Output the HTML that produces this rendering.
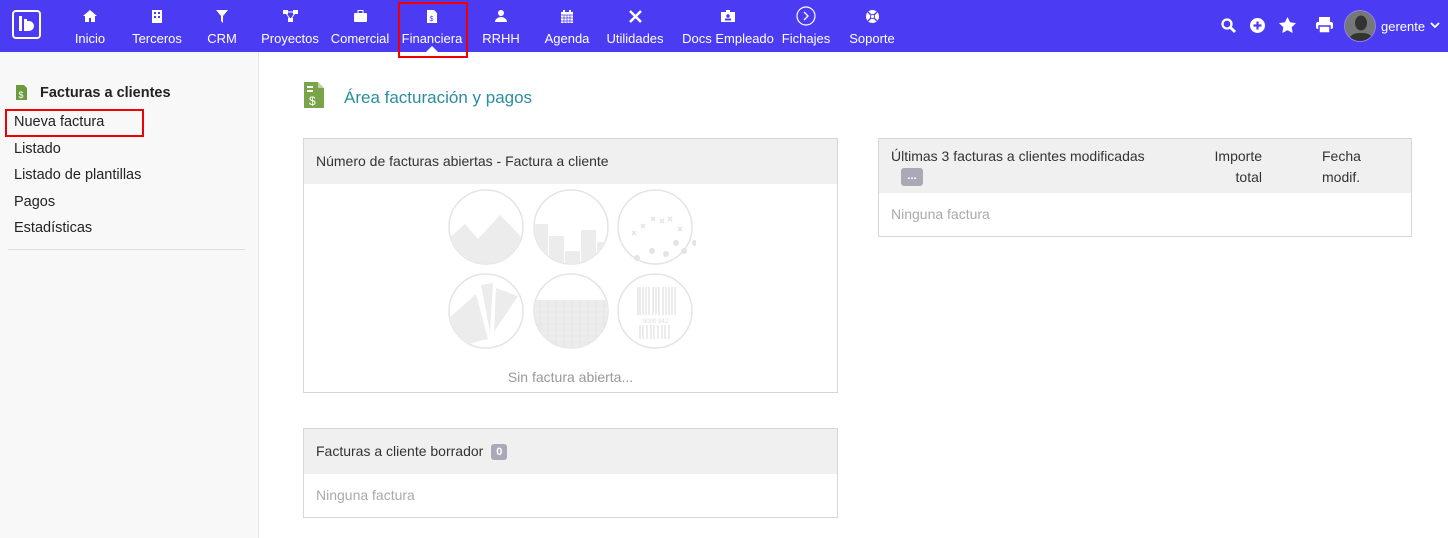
<!DOCTYPE html>
<html><head><meta charset="utf-8"><style>
*{box-sizing:border-box;margin:0;padding:0}
body{width:1448px;height:538px;overflow:hidden;font-family:"Liberation Sans",sans-serif;background:#fff;position:relative;color:#333}
.top{position:absolute;left:0;top:0;width:1448px;height:52px;background:#4b3cf4}
.logo{position:absolute;left:12px;top:10px;width:29px;height:29px;border:2.5px solid #fff;border-radius:4px}
.nav{position:absolute;top:0;height:52px;width:100px;text-align:center;color:#fff;font-size:13px;transform:translateX(-50%);white-space:nowrap}
.nav .ic{position:absolute;left:0;width:100%;top:10px;height:13px;display:flex;justify-content:center}
.nav .lb{position:absolute;left:0;width:100%;top:31px}
.sel{position:absolute;left:398px;top:2px;width:70px;height:56px;border:2px solid #e00;z-index:3}
.side{position:absolute;left:0;top:52px;width:259px;height:486px;background:#f8f8f8;border-right:1px solid #e6e6e6}
.side a{position:absolute;left:14px;font-size:14.5px;color:#222}
.box{position:absolute;border:1px solid #d6d6d6;background:#fff}
.hd{background:#f0f0f0;font-size:14px;color:#333}
.muted{color:#aaa;font-size:14px}
</style></head><body>
<div class="top">
<div class="logo"><svg width="24" height="24" viewBox="0 0 24 24"><rect x="5" y="4" width="3" height="15" fill="#fff"/><rect x="10" y="7" width="3" height="12" fill="#fff"/><path d="M13 9 h2 a4 4 0 0 1 0 10 h-2z" fill="#fff"/></svg></div>
<div class="nav" style="left:90px"><div class="ic"><svg width="14" height="12"><path d="M7 0L0 6h2v6h4V8h2v4h4V6h2z" fill="#fff"/></svg></div><div class="lb">Inicio</div></div>
<div class="nav" style="left:157px"><div class="ic"><svg width="10" height="13"><rect width="10" height="13" fill="#fff"/><rect x="2" y="2" width="2" height="2" fill="#4b3cf4"/><rect x="6" y="2" width="2" height="2" fill="#4b3cf4"/><rect x="2" y="6" width="2" height="2" fill="#4b3cf4"/><rect x="6" y="6" width="2" height="2" fill="#4b3cf4"/></svg></div><div class="lb">Terceros</div></div>
<div class="nav" style="left:222px"><div class="ic"><svg width="12" height="13"><path d="M0 0h12L7 6v7L5 11V6z" fill="#fff"/></svg></div><div class="lb">CRM</div></div>
<div class="nav" style="left:290px"><div class="ic"><svg width="15" height="12"><rect width="5" height="4" fill="#fff"/><rect x="10" width="5" height="4" fill="#fff"/><rect x="5" y="8" width="5" height="4" fill="#fff"/><path d="M3 3l4 6M12 3l-4 6M5 2h5" stroke="#fff"/></svg></div><div class="lb">Proyectos</div></div>
<div class="nav" style="left:360px"><div class="ic"><svg width="13" height="12"><rect y="3" width="13" height="9" rx="1" fill="#fff"/><rect x="4" y=".5" width="5" height="3" fill="none" stroke="#fff"/></svg></div><div class="lb">Comercial</div></div>
<div class="nav" style="left:432px"><div class="ic"><svg width="10" height="13"><path d="M0 0h7l3 3v10H0z" fill="#fff"/><text x="2.5" y="11" font-size="7" fill="#4b3cf4" font-family="Liberation Sans">$</text></svg></div><div class="lb">Financiera</div><svg width="12" height="6" style="position:absolute;left:44px;top:46px"><path d="M0 6L6 0l6 6z" fill="#fff"/></svg></div>
<div class="nav" style="left:501px"><div class="ic"><svg width="12" height="12"><circle cx="6" cy="3" r="3" fill="#fff"/><path d="M0 12a6 5 0 0 1 12 0z" fill="#fff"/></svg></div><div class="lb">RRHH</div></div>
<div class="nav" style="left:567px"><div class="ic"><svg width="12" height="13"><rect y="2" width="12" height="11" fill="#fff"/><rect x="2" y="0" width="2" height="3" fill="#fff"/><rect x="8" width="2" height="3" fill="#fff"/><path d="M0 5h12M3 5v8M6 5v8M9 5v8M0 8h12M0 11h12" stroke="#4b3cf4" stroke-width=".7"/></svg></div><div class="lb">Agenda</div></div>
<div class="nav" style="left:635px"><div class="ic"><svg width="13" height="13"><path d="M1 1l11 11M12 1L1 12" stroke="#fff" stroke-width="2.5"/></svg></div><div class="lb">Utilidades</div></div>
<div class="nav" style="left:728px"><div class="ic"><svg width="14" height="12"><rect y="2" width="14" height="10" fill="#fff"/><rect x="5" width="4" height="3" fill="#fff"/><circle cx="7" cy="6" r="1.8" fill="#4b3cf4"/><rect x="4" y="8.5" width="6" height="2" fill="#4b3cf4"/></svg></div><div class="lb">Docs Empleado</div></div>
<div class="nav" style="left:806px"><div class="ic" style="top:6px;height:20px"><svg width="20" height="20"><circle cx="10" cy="10" r="9" fill="none" stroke="#fff" stroke-width="1.2"/><path d="M8 6l4 4-4 4" stroke="#fff" fill="none" stroke-width="1.3"/></svg></div><div class="lb">Fichajes</div></div>
<div class="nav" style="left:872px"><div class="ic"><svg width="13" height="13"><circle cx="6.5" cy="6.5" r="6.5" fill="#fff"/><circle cx="6.5" cy="6.5" r="2.5" fill="#4b3cf4"/><path d="M2 2l9 9M11 2l-9 9" stroke="#4b3cf4" stroke-width="1.4"/><circle cx="6.5" cy="6.5" r="1.6" fill="#fff"/></svg></div><div class="lb">Soporte</div></div>
<svg style="position:absolute;left:1221px;top:18px" width="16" height="16"><circle cx="6" cy="6" r="4.5" fill="none" stroke="#fff" stroke-width="2.3"/><path d="M9 9l5 5" stroke="#fff" stroke-width="2.8"/></svg>
<svg style="position:absolute;left:1250px;top:18px" width="15" height="15"><circle cx="7.5" cy="7.5" r="7.5" fill="#fff"/><path d="M7.5 3.5v8M3.5 7.5h8" stroke="#4b3cf4" stroke-width="2.2"/></svg>
<svg style="position:absolute;left:1279px;top:17px" width="17" height="16"><path d="M8.5 0l2.6 5.3 5.9.8-4.3 4.1 1 5.8-5.2-2.8-5.2 2.8 1-5.8L0 6.1l5.9-.8z" fill="#fff"/></svg>
<svg style="position:absolute;left:1316px;top:17px" width="17" height="16"><rect x="3" y="0" width="11" height="5" fill="#fff"/><rect x="0" y="5" width="17" height="7" rx="2" fill="#fff"/><rect x="3" y="9" width="11" height="7" fill="#fff" stroke="#4b3cf4" stroke-width="1.5"/></svg>
<div style="position:absolute;left:1344px;top:10px;width:32px;height:32px;border-radius:50%;background:#777;border:1px solid #8a80f0;overflow:hidden"><svg width="32" height="32"><ellipse cx="16" cy="12" rx="6" ry="7.5" fill="#333"/><path d="M3 32c1-9 7-10 13-10s12 1 13 10z" fill="#333"/></svg></div>
<div style="position:absolute;left:1381px;top:19px;color:#fff;font-size:13px">gerente</div>
<svg style="position:absolute;left:1430px;top:22px" width="10" height="7"><path d="M1 1l4 4 4-4" stroke="#fff" stroke-width="1.8" fill="none"/></svg>
</div>
<div class="sel"></div>
<div class="side">
<svg style="position:absolute;left:16px;top:33px" width="11" height="15"><path d="M0 0h8l3 3v12H0z" fill="#6c9a3e"/><text x="2.5" y="13" font-size="9" fill="#fff" font-family="Liberation Sans">$</text></svg>
<div style="position:absolute;left:40px;top:33px;font-weight:bold;font-size:14.5px;color:#222">Facturas a clientes</div>
<a style="top:62px">Nueva factura</a>
<a style="top:89px">Listado</a>
<a style="top:115px">Listado de plantillas</a>
<a style="top:142px">Pagos</a>
<a style="top:168px">Estadísticas</a>
<div style="position:absolute;left:8px;top:197px;width:237px;border-top:1px solid #ddd"></div>
</div>
<div style="position:absolute;left:5px;top:109px;width:139px;height:28px;border:2px solid #e00"></div>
<svg style="position:absolute;left:304px;top:82px" width="20" height="26"><path d="M0 0h14l6 6v20H0z" fill="#7aa44a"/><path d="M14 0v6h6" fill="#fff" opacity=".5"/><rect x="3" y="4" width="6" height="2" fill="#fff"/><rect x="3" y="8" width="6" height="2" fill="#fff"/><text x="5" y="23" font-size="12" fill="#fff" font-family="Liberation Sans">$</text></svg>
<div style="position:absolute;left:344px;top:88px;font-size:17px;color:#2a8ea0">Área facturación y pagos</div>
<div class="box" style="left:303px;top:138px;width:535px;height:255px">
<div class="hd" style="height:45px;padding:14px 12px">Número de facturas abiertas - Factura a cliente</div>
<svg style="position:absolute;left:144px;top:50px" width="248" height="164">
<defs>
<clipPath id="c1"><circle cx="38" cy="38" r="37"/></clipPath>
<clipPath id="c2"><circle cx="123" cy="38" r="37"/></clipPath>
<clipPath id="c4"><circle cx="38" cy="122" r="37"/></clipPath>
<clipPath id="c5"><circle cx="123" cy="122" r="37"/></clipPath>
<clipPath id="c6"><circle cx="207" cy="122" r="37"/></clipPath>
</defs>
<g fill="#fff" stroke="#e4e4e4" stroke-width="1.5">
<circle cx="38" cy="38" r="37"/><circle cx="123" cy="38" r="37"/><circle cx="207" cy="38" r="37"/>
<circle cx="38" cy="122" r="37"/><circle cx="123" cy="122" r="37"/><circle cx="207" cy="122" r="37"/>
</g>
<path clip-path="url(#c1)" d="M0 50L17 35 30 50 52 26 80 55V80H0z" fill="#ececec"/>
<g clip-path="url(#c2)" fill="#ececec"><rect x="86" y="35" width="14" height="50"/><rect x="101" y="47" width="15" height="40"/><rect x="117" y="62" width="15" height="30"/><rect x="133" y="41" width="15" height="50"/><rect x="149" y="53" width="14" height="40"/></g>
<g fill="#e4e4e4"><circle cx="189" cy="69" r="3"/><circle cx="204" cy="62" r="3"/><circle cx="218" cy="65" r="3"/><circle cx="228" cy="54" r="3"/><circle cx="236" cy="62" r="3"/><circle cx="247" cy="54" r="3"/></g>
<g stroke="#e4e4e4" stroke-width="1.5"><path d="M184 42l4 4m0-4l-4 4M193 35l4 4m0-4l-4 4M203 28l4 4m0-4l-4 4M212 30l4 4m0-4l-4 4M220 28l4 4m0-4l-4 4M230 38l4 4m0-4l-4 4"/></g>
<g clip-path="url(#c4)" fill="#ececec"><path d="M0 160L0 130 28 105 40 150z"/><path d="M33 96L45 94 42 143z"/><path d="M48 99L70 107 46 143z"/></g>
<g clip-path="url(#c5)"><rect x="80" y="111" width="90" height="60" fill="#ececec"/><path d="M80 117h90M80 123h90M80 129h90M80 135h90M80 141h90M80 147h90M80 153h90M92 111v50M100 111v50M108 111v50M116 111v50M124 111v50M132 111v50M140 111v50M148 111v50M156 111v50" stroke="#e2e2e2" stroke-width=".6"/></g>
<g clip-path="url(#c6)" stroke="#e2e2e2"><path d="M190 98v28M192 98v28M195 98v28M198 98v28M201 98v28M205 98v28M208 98v28M211 98v28M215 98v28M218 98v28M221 98v28M224 98v28M227 98v28" stroke-width="1.3"/><path d="M192 136v14M195 136v14M199 136v14M203 136v14M206 136v14M210 136v14M214 136v14M217 136v14M221 136v14" stroke-width="1.3"/><text x="195" y="134" font-size="6" fill="#ddd" stroke="none" font-family="Liberation Sans">8000 342</text></g>
</svg>
<div class="muted" style="position:absolute;left:0;width:100%;text-align:center;top:230px;color:#999">Sin factura abierta...</div>
</div>
<div class="box" style="left:303px;top:428px;width:535px;height:90px">
<div class="hd" style="height:45px;padding:14px 12px">Facturas a cliente borrador <span style="display:inline-block;background:#a9a9b8;color:#fff;font-size:11px;font-weight:bold;padding:2px 5px;border-radius:3px;margin-left:4px;vertical-align:1px">0</span></div>
<div class="muted" style="padding:13px 12px">Ninguna factura</div>
</div>
<div class="box" style="left:878px;top:138px;width:534px;height:99px">
<div class="hd" style="height:54px;position:relative">
<div style="position:absolute;left:12px;top:9px">Últimas 3 facturas a clientes modificadas</div>
<div style="position:absolute;left:22px;top:29px;width:22px;height:18px;background:#a9a9b8;border-radius:3px;color:#fff;font-size:11px;font-weight:bold;text-align:center;line-height:16px">...</div>
<div style="position:absolute;right:149px;top:7px;text-align:right;line-height:21px">Importe<br>total</div>
<div style="position:absolute;left:443px;top:7px;line-height:21px">Fecha<br>modif.</div>
</div>
<div class="muted" style="padding:13px 12px">Ninguna factura</div>
</div>
</body></html>
